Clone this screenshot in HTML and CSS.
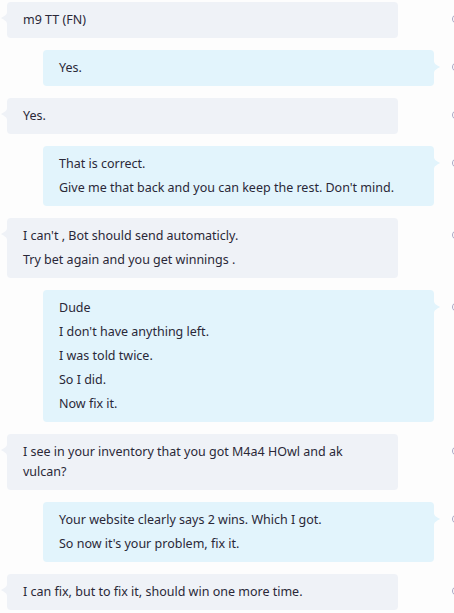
FILE: index.html
```html
<!DOCTYPE html>
<html>
<head>
<meta charset="utf-8">
<link rel="stylesheet" href="styles.css">
</head>
<body>
<div class="chat">
  <div class="row in">
    <div class="bubble"><p>m9 TT (FN)</p><svg class="tail" width="6" height="12" viewBox="0 0 6 12"><path d="M6 0 C6 3 3 4 0 6 C3 8 6 9 6 12 Z"/></svg></div>
    <span class="status"></span>
  </div>
  <div class="row out">
    <div class="bubble"><p>Yes.</p><svg class="tail" width="6" height="12" viewBox="0 0 6 12"><path d="M0 0 C0 3 3 4 6 6 C3 8 0 9 0 12 Z"/></svg></div>
    <span class="status"></span>
  </div>
  <div class="row in">
    <div class="bubble"><p>Yes.</p><svg class="tail" width="6" height="12" viewBox="0 0 6 12"><path d="M6 0 C6 3 3 4 0 6 C3 8 6 9 6 12 Z"/></svg></div>
    <span class="status"></span>
  </div>
  <div class="row out">
    <div class="bubble"><p>That is correct.</p><p>Give me that back and you can keep the rest. Don't mind.</p><svg class="tail" width="6" height="12" viewBox="0 0 6 12"><path d="M0 0 C0 3 3 4 6 6 C3 8 0 9 0 12 Z"/></svg></div>
    <span class="status"></span>
  </div>
  <div class="row in">
    <div class="bubble"><p>I can't , Bot should send automaticly.</p><p>Try bet again and you get winnings .</p><svg class="tail" width="6" height="12" viewBox="0 0 6 12"><path d="M6 0 C6 3 3 4 0 6 C3 8 6 9 6 12 Z"/></svg></div>
    <span class="status"></span>
  </div>
  <div class="row out">
    <div class="bubble"><p>Dude</p><p>I don't have anything left.</p><p>I was told twice.</p><p>So I did.</p><p>Now fix it.</p><svg class="tail" width="6" height="12" viewBox="0 0 6 12"><path d="M0 0 C0 3 3 4 6 6 C3 8 0 9 0 12 Z"/></svg></div>
    <span class="status"></span>
  </div>
  <div class="row in">
    <div class="bubble"><p>I see in your inventory that you got M4a4 HOwl and ak vulcan?</p><svg class="tail" width="6" height="12" viewBox="0 0 6 12"><path d="M6 0 C6 3 3 4 0 6 C3 8 6 9 6 12 Z"/></svg></div>
    <span class="status"></span>
  </div>
  <div class="row out">
    <div class="bubble"><p>Your website clearly says 2 wins. Which I got.</p><p>So now it's your problem, fix it.</p><svg class="tail" width="6" height="12" viewBox="0 0 6 12"><path d="M0 0 C0 3 3 4 6 6 C3 8 0 9 0 12 Z"/></svg></div>
    <span class="status"></span>
  </div>
  <div class="row in">
    <div class="bubble"><p>I can fix, but to fix it, should win one more time.</p><svg class="tail" width="6" height="12" viewBox="0 0 6 12"><path d="M6 0 C6 3 3 4 0 6 C3 8 6 9 6 12 Z"/></svg></div>
    <span class="status"></span>
  </div>
</div>
</body>
</html>
```

FILE: styles.css
```css
html, body {
  margin: 0;
  padding: 0;
  background: #fdfdfd;
  overflow: hidden;
}
body {
  width: 454px;
  height: 613px;
  font-family: "Noto Sans", "Open Sans", sans-serif;
  font-size: 12.5px;
  color: #2a2838;
}
.chat {
  display: flex;
  flex-direction: column;
  gap: 12px;
  padding-top: 2px;
}
.row {
  position: relative;
  display: flex;
}
.bubble {
  position: relative;
  width: 391px;
  box-sizing: border-box;
  padding: 8px 16px 8px 16px;
  border-radius: 4px;
  display: flex;
  flex-direction: column;
  gap: 4px;
}
.bubble p {
  margin: 0;
  line-height: 20px;
}
.in .bubble {
  margin-left: 7px;
  background: #eff2f7;
}
.out .bubble {
  margin-left: 43px;
  background: #e2f4fc;
}
.tail {
  position: absolute;
  top: 10px;
}
.in .tail {
  left: -6px;
  fill: #eff2f7;
}
.out .tail {
  right: -6px;
  top: 11px;
  fill: #e2f4fc;
}
.status {
  position: absolute;
  left: 452px;
  top: 12px;
  width: 8px;
  height: 8px;
  border: 1px solid #a9a8c4;
  border-radius: 50%;
}
```
